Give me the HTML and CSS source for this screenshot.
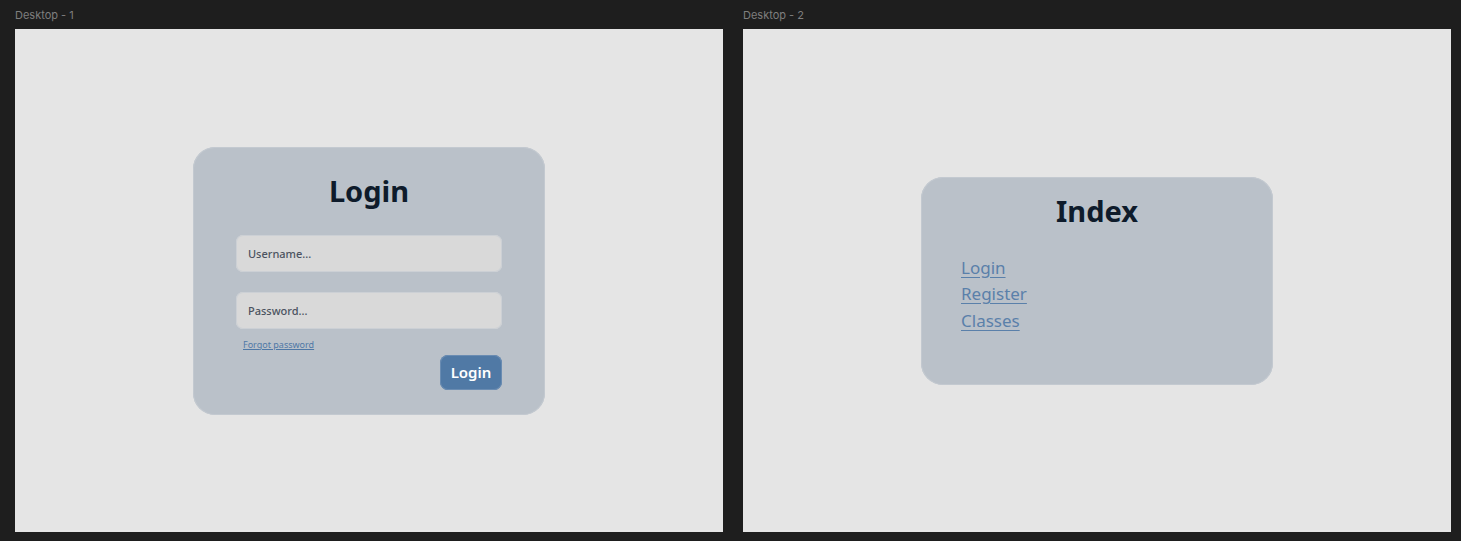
FILE: index.html
```html
<!DOCTYPE html>
<html lang="en">
<head>
<meta charset="utf-8">
<title>Desktops</title>
<link rel="stylesheet" href="styles.css">
</head>
<body>
<div class="canvas">
  <section class="artboard">
    <div class="label">Desktop - 1</div>
    <div class="frame">
      <div class="card login-card">
        <h1 class="title">Login</h1>
        <input class="field field-user" type="text" placeholder="Username...">
        <input class="field field-pass" type="password" placeholder="Password...">
        <a class="forgot" href="#">Forgot password</a>
        <div class="actions"><button class="btn" type="button">Login</button></div>
      </div>
    </div>
  </section>
  <section class="artboard">
    <div class="label">Desktop - 2</div>
    <div class="frame">
      <div class="card index-card">
        <h1 class="title">Index</h1>
        <nav class="links">
          <a href="#">Login</a>
          <a href="#">Register</a>
          <a href="#">Classes</a>
        </nav>
      </div>
    </div>
  </section>
</div>
</body>
</html>
```
FILE: styles.css
```css
* { box-sizing: border-box; }
html, body { margin: 0; padding: 0; }
body {
  background: #1e1e1e;
  font-family: "Noto Sans", "Open Sans", sans-serif;
  width: 1461px;
  height: 541px;
  overflow: hidden;
}
.canvas {
  display: flex;
  gap: 20px;
  padding-left: 15px;
}
.artboard {
  display: flex;
  flex-direction: column;
}
.label {
  height: 29px;
  padding-top: 8px;
  font-size: 11px;
  line-height: 14px;
  color: #7f7f7f;
  font-family: "Inter", "Noto Sans", sans-serif;
}
.frame {
  width: 708px;
  height: 503px;
  background: #e5e5e5;
  display: flex;
  align-items: center;
  justify-content: center;
}
.card {
  width: 352px;
  background: #bac1c9;
  border-radius: 22px;
  box-shadow: inset 0 0 0 1px #c3c9d0;
}
.title {
  margin: 0;
  text-align: center;
  font-size: 29px;
  line-height: 36px;
  font-weight: 700;
  color: #0e1b2b;
}
.login-card {
  height: 268px;
  padding: 26px 43px 0;
  display: flex;
  flex-direction: column;
}
.field {
  display: block;
  width: 266px;
  height: 37px;
  border: none;
  outline: none;
  border-radius: 7px;
  background: #d9d9d9;
  padding: 0 12px;
  font-family: "Noto Sans", sans-serif;
  font-size: 11px;
  font-weight: 500;
  color: #4b5360;
  box-shadow: inset 0 0 0 1px #ccd0d5;
}
.field::placeholder { color: #4b5360; opacity: 1; }
.field-user { margin-top: 26px; }
.field-pass { margin-top: 20px; }
.forgot {
  margin-top: 9px;
  margin-left: 7px;
  align-self: flex-start;
  font-size: 9px;
  line-height: 13px;
  color: #4f78a6;
  text-decoration: underline;
}
.actions {
  display: flex;
  justify-content: flex-end;
  margin-top: 4px;
}
.btn {
  width: 62px;
  height: 35px;
  border: none;
  border-radius: 8px;
  background: #5079a5;
  color: #ffffff;
  font-family: "Noto Sans", sans-serif;
  font-size: 15px;
  font-weight: 600;
  padding: 0;
  box-shadow: inset 0 0 0 1px #6a8cb2;
}
.index-card {
  height: 208px;
  padding: 16px 40px 0;
}
.links {
  display: flex;
  flex-direction: column;
  margin-top: 26px;
}
.links a {
  align-self: flex-start;
  font-size: 17px;
  line-height: 26.5px;
  color: #5a80aa;
  text-decoration: underline;
  text-underline-offset: 3px;
}
```
